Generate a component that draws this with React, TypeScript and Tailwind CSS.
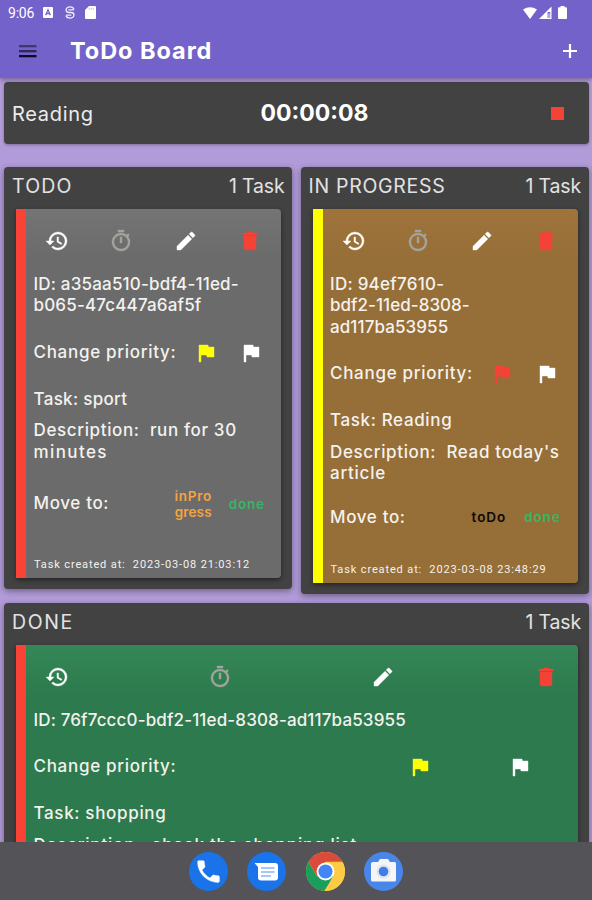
import type { ReactNode } from "react";

const PATHS = {
  history:
    "M13 3a9 9 0 0 0-9 9H1l3.89 3.89.07.14L9 12H6c0-3.87 3.13-7 7-7s7 3.13 7 7-3.13 7-7 7c-1.93 0-3.68-.79-4.94-2.06l-1.42 1.42A8.954 8.954 0 0 0 13 21a9 9 0 0 0 0-18zm-1 5v5l4.28 2.54.72-1.21-3.5-2.08V8H12z",
  timer:
    "M15 1H9v2h6V1zm-4 13h2V8h-2v6zm8.03-6.61 1.42-1.42c-.43-.51-.9-.99-1.41-1.41l-1.42 1.42A8.962 8.962 0 0 0 12 4c-4.97 0-9 4.03-9 9s4.02 9 9 9a8.994 8.994 0 0 0 7.03-14.61zM12 20c-3.87 0-7-3.13-7-7s3.13-7 7-7 7 3.13 7 7-3.13 7-7 7z",
  edit: "M3 17.25V21h3.75L17.81 9.94l-3.75-3.75L3 17.25zM20.71 7.04a.996.996 0 0 0 0-1.41l-2.34-2.34a.996.996 0 0 0-1.41 0l-1.83 1.83 3.75 3.75 1.83-1.83z",
  trash: "M6 19c0 1.1.9 2 2 2h8c1.1 0 2-.9 2-2V7H6v12zM19 4h-3.5l-1-1h-5l-1 1H5v2h14V4z",
  flag: "M14.4 6 14 4H5v17h2v-7h5.6l.4 2h7V6z",
  phone:
    "M6.62 10.79c1.44 2.83 3.76 5.14 6.59 6.59l2.2-2.2c.27-.27.67-.36 1.02-.24 1.12.37 2.33.57 3.57.57.55 0 1 .45 1 1V20c0 .55-.45 1-1 1-9.39 0-17-7.61-17-17 0-.55.45-1 1-1h3.5c.55 0 1 .45 1 1 0 1.25.2 2.45.57 3.57.11.35.03.74-.25 1.02l-2.2 2.2z",
};

function Icon({ name, className = "size-6" }: { name: keyof typeof PATHS; className?: string }) {
  return (
    <svg viewBox="0 0 24 24" className={`shrink-0 fill-current stroke-current ${className}`} strokeWidth="0.4">
      <path d={PATHS[name]} />
    </svg>
  );
}

function StatusBar() {
  return (
    <div className="flex h-[25px] items-center pr-[25px] pl-2 text-white">
      <span className="w-[35px] font-[Roboto] text-[14px] leading-4 tracking-[-0.2px]">9:06</span>
      <svg viewBox="0 0 10 11" className="mr-[11px] h-[11px] w-[10px]">
        <rect width="10" height="11" rx="1" fill="#fff" />
        <path d="M2.6 8.3 5 2.8l2.4 5.5M3.6 6.6h2.8" fill="none" stroke="#7262c9" strokeWidth="1.3" />
      </svg>
      <svg viewBox="0 0 12 14" className="mr-[9px] h-[13px] w-3" fill="none" stroke="#eeebfa" strokeWidth="1.4">
        <path d="M10.2 4C9.800 2 8 1 6 1 3.600 1 1.800 2.200 1.800 4S3.200 7 5 7h2.200c2 0 3.100.8 3.100 2.600C10.300 11.600 8.400 13 6 13c-2 0-3.900-.8-4.300-2.900M4.200 4.200h5.800M2 9.800h5.500" />
      </svg>
      <svg viewBox="0 0 11 13" className="h-[13px] w-[11px]">
        <path d="M4 0h6q1 0 1 1v11q0 1-1 1H1q-1 0-1-1V4z" fill="#fff" />
        <path d="M4.300 1.800v2M6.300 1.800v2M8.300 1.800v2" stroke="#b9b0e4" strokeWidth=".8" />
      </svg>
      <svg viewBox="0 0 14 12" className="ml-auto h-3 w-[14px]">
        <path d="M0 2.600Q7-2.200 14 2.600L7 12z" fill="#fff" />
      </svg>
      <svg viewBox="0 0 13 13" className="ml-[2px] h-[13px] w-[13px]">
        <path d="M0 13 12.500.500V13z" fill="#fff" />
        <path d="M8.600 6h2.600v6H8.600z" fill="#7262c9" />
        <path d="M9.400 7.500h1.200V12H9.400z" fill="#d8d2f2" />
      </svg>
      <svg viewBox="0 0 9 13" className="ml-[6px] h-[13px] w-[9px]">
        <path d="M2.500 0h4v1.200H8q1 0 1 1V12q0 1-1 1H1q-1 0-1-1V2.200q0-1 1-1h1.500z" fill="#fff" />
      </svg>
    </div>
  );
}

type TaskProps = {
  bar: string;
  fill: string;
  id: ReactNode;
  flag: string;
  task: ReactNode;
  description: ReactNode;
  flagsWidth: string;
  move?: ReactNode;
  created?: string;
};

function TaskCard({ bar, fill, id, flag, task, description, flagsWidth, move, created }: TaskProps) {
  return (
    <div
      className={`flex flex-1 flex-col rounded-r-[4px] border-l-10 text-[17px] leading-[21.5px] font-medium whitespace-pre text-[#f4f2ee] shadow-[0_2px_5px_rgba(0,0,0,0.45)] ${bar} ${fill}`}
    >
      <div className="flex h-[64.5px] shrink-0 items-center justify-between pr-[19px] pb-px pl-[19px]">
        <Icon name="history" className="size-6 text-white" />
        <Icon name="timer" className="size-6 text-[#a5a39d]" />
        <Icon name="edit" className="size-6 text-white" />
        <Icon name="trash" className="size-6 text-[#f44336]" />
      </div>
      <div className="pl-[7.500px]">{id}</div>
      <div className="flex h-[72px] shrink-0 items-center pr-2 pl-[7.500px]">
        <span className="tracking-[0.710px]">Change priority:</span>
        <div className={`ml-auto flex shrink-0 justify-around ${flagsWidth}`}>
          <Icon name="flag" className={`size-6 ${flag}`} />
          <Icon name="flag" className="size-6 text-white" />
        </div>
      </div>
      <div className="pl-[7.500px]">{task}</div>
      <div className="pt-[10px] pl-[7.500px]">{description}</div>
      {move}
      {created && (
        <div className="flex flex-1 items-end pb-[6px] pl-2 font-[Roboto] text-[11px] leading-[14px] font-normal tracking-[0.870px]">
          {created}
        </div>
      )}
    </div>
  );
}

function Column({ title, titleClass, size, children }: { title: string; titleClass: string; size: string; children: ReactNode }) {
  return (
    <section
      className={`flex flex-col rounded-[4px] bg-[#424242] pr-[11px] pb-[11px] pl-3 shadow-[0_2px_6px_rgba(0,0,0,0.4)] ${size}`}
    >
      <header className="-mr-[3.500px] -ml-[4px] flex h-[42px] shrink-0 items-center justify-between pb-[5px] text-[19.500px] leading-6 text-[#e2e2e2]">
        <span className={titleClass}>{title}</span>
        <span className="tracking-[-0.160px]">1 Task</span>
      </header>
      {children}
    </section>
  );
}

function Dock() {
  return (
    <nav className="flex h-[58px] shrink-0 items-center justify-center gap-[19.400px] bg-[#545357]">
      <span className="flex size-[39px] items-center justify-center rounded-full bg-[#1a73e8] text-white">
        <Icon name="phone" className="size-[29px]" />
      </span>
      <svg viewBox="0 0 39 39" className="size-[39px]">
        <circle cx="19.500" cy="19.500" r="19.500" fill="#1a73e8" />
        <path d="M7.500 11H28q3 0 3 3v11.500q0 3-3 3H14q-3 0-3-3V15z" fill="#fff" />
        <path d="M14 16h13.500M14 20h13.500M14 24h10" stroke="#8ab4f8" strokeWidth="1.700" />
      </svg>
      <svg viewBox="0 0 48 48" className="size-[39px]">
        <circle cx="24" cy="24" r="24" fill="#fecb45" />
        <path d="M24 24 13.600 30 3.200 12A24 24 0 0 0 22.500 48L34.400 30z" fill="#1a9e5c" />
        <path d="M13.600 30 3.200 12A24 24 0 0 1 44.800 12H24z" fill="#db4b3c" />
        <path d="M24 13h21.300A24 24 0 0 1 23 48L33.500 29.500z" fill="#fecb45" />
        <circle cx="24" cy="24" r="11" fill="#fff" />
        <circle cx="24" cy="24" r="8.700" fill="#4285f4" />
      </svg>
      <svg viewBox="0 0 39 39" className="size-[39px]">
        <circle cx="19.500" cy="19.500" r="19.500" fill="#4a86ea" />
        <path d="M9 10h5l2-3h8l2 3h4.500q1.500 0 1.500 1.500V28q0 1.500-1.500 1.500H8.500Q7 29.500 7 28V11.500Q7 10 9 10z" fill="#f5f5f5" />
        <circle cx="19.500" cy="19.500" r="7" fill="#e2e4e9" />
        <circle cx="19.500" cy="19.500" r="4.800" fill="#3f7fe8" />
      </svg>
    </nav>
  );
}

export default function App() {
  return (
    <div className="flex h-[900px] w-[592px] flex-col overflow-hidden bg-[#b19bd9] font-[Inter,sans-serif]">
      <div className="z-10 h-[78px] shrink-0 bg-[#7262c9] shadow-[0_2px_5px_rgba(0,0,0,0.35)]">
        <StatusBar />
        <div className="flex h-[52px] items-center pr-[10px] pl-4">
          <svg viewBox="0 0 24 24" className="size-6">
            <path d="M3 6h17.500v2.300H3z" fill="#41366f" />
            <path d="M3 11h17.500v2.300H3z" fill="#30285a" />
            <path d="M3 16h17.500v2.300H3z" fill="#0d0a22" />
          </svg>
          <h1 className="ml-[30px] text-[23.500px] leading-8 font-bold tracking-[0.950px] text-white">ToDo Board</h1>
          <svg viewBox="0 0 24 24" className="ml-auto size-6">
            <path d="M5 12h14M12 5v14" stroke="#fff" strokeWidth="2.200" />
          </svg>
        </div>
      </div>

      <main className="flex min-h-0 flex-1 flex-col overflow-hidden pt-1 pr-[3.500px] pl-[4px]">
        <div className="flex h-[62px] shrink-0 items-center rounded-[4px] bg-[#424242] pt-px pr-[25px] pl-[8px] shadow-[0_1px_3px_rgba(0,0,0,0.3)]">
          <span className="w-[248.500px] text-[20px] tracking-[0.700px] text-[#ececec]">Reading</span>
          <span className="text-[23px] font-bold text-white">00:00:08</span>
          <span className="ml-auto size-[12.500px] bg-[#f44336]" />
        </div>

        <div className="mt-[23px] flex shrink-0 items-start gap-[8.500px]">
          <Column title="TODO" titleClass="tracking-[1.200px]" size="h-[422px] w-[288px]">
            <TaskCard
              bar="border-[#f94336]"
              fill="bg-linear-to-b from-[#747474] to-[#6b6b6b] to-[50px]"
              flag="text-[#ffff00]"
              flagsWidth="w-[90px]"
              id={
                <>
                  <div className="tracking-[0.190px]">ID: a35aa510-bdf4-11ed-</div>
                  <div className="tracking-[0.170px]">b065-47c447a6af5f</div>
                </>
              }
              task={<div className="tracking-[0.310px]">Task: sport</div>}
              description={
                <>
                  <div className="tracking-[0.630px]">{"Description:  run for 30"}</div>
                  <div className="tracking-[1.390px]">minutes</div>
                </>
              }
              move={
                <div className="flex h-[82px] shrink-0 items-center pr-2 pl-[7.500px]">
                  <span className="tracking-[0.650px]">Move to:</span>
                  <div className="ml-auto flex w-[107px] items-center justify-around text-center text-[13.500px] leading-[16.500px] font-semibold">
                    <span className="w-[38px] text-[#f5a340]">
                      <span className="block tracking-[0.730px]">inPro</span>
                      <span className="block tracking-[0.150px]">gress</span>
                    </span>
                    <span className="tracking-[0.800px] text-[#34b764]">done</span>
                  </div>
                </div>
              }
              created={"Task created at:  2023-03-08 21:03:12"}
            />
          </Column>

          <Column title="IN PROGRESS" titleClass="tracking-[0.700px]" size="h-[427px] w-[288px]">
            <TaskCard
              bar="border-[#ffff00]"
              fill="bg-linear-to-b from-[#9f743c] to-[#966e37] to-[50px]"
              flag="text-[#f44336]"
              flagsWidth="w-[90px]"
              id={
                <>
                  <div className="tracking-[0.260px]">ID: 94ef7610-</div>
                  <div className="tracking-[0.040px]">bdf2-11ed-8308-</div>
                  <div className="tracking-[0.090px]">ad117ba53955</div>
                </>
              }
              task={<div className="tracking-[0.640px]">Task: Reading</div>}
              description={
                <>
                  <div className="tracking-[0.630px]">{"Description:  Read today's"}</div>
                  <div className="tracking-[0.750px]">article</div>
                </>
              }
              move={
                <div className="flex h-[66px] shrink-0 items-center pr-2 pl-[7.500px]">
                  <span className="tracking-[0.650px]">Move to:</span>
                  <div className="ml-auto flex w-[107px] items-center justify-around text-[13.500px] leading-[16.500px] font-semibold">
                    <span className="tracking-[0.970px] text-[#0c0a06]">toDo</span>
                    <span className="tracking-[0.800px] text-[#34b764]">done</span>
                  </div>
                </div>
              }
              created={"Task created at:  2023-03-08 23:48:29"}
            />
          </Column>
        </div>

        <div className="mt-[9px] flex shrink-0">
          <Column title="DONE" titleClass="tracking-[1.600px]" size="h-[430px] w-full">
            <TaskCard
              bar="border-[#f94336]"
              fill="bg-linear-to-b from-[#358758] to-[#2c7a4d] to-[50px]"
              flag="text-[#ffff00]"
              flagsWidth="w-[200px]"
              id={<div className="tracking-[0.140px]">ID: 76f7ccc0-bdf2-11ed-8308-ad117ba53955</div>}
              task={<div className="tracking-[0.670px]">Task: shopping</div>}
              description={<div className="tracking-[0.750px]">{"Description:  check the shopping list"}</div>}
            />
          </Column>
        </div>
      </main>
      <Dock />
    </div>
  );
}
